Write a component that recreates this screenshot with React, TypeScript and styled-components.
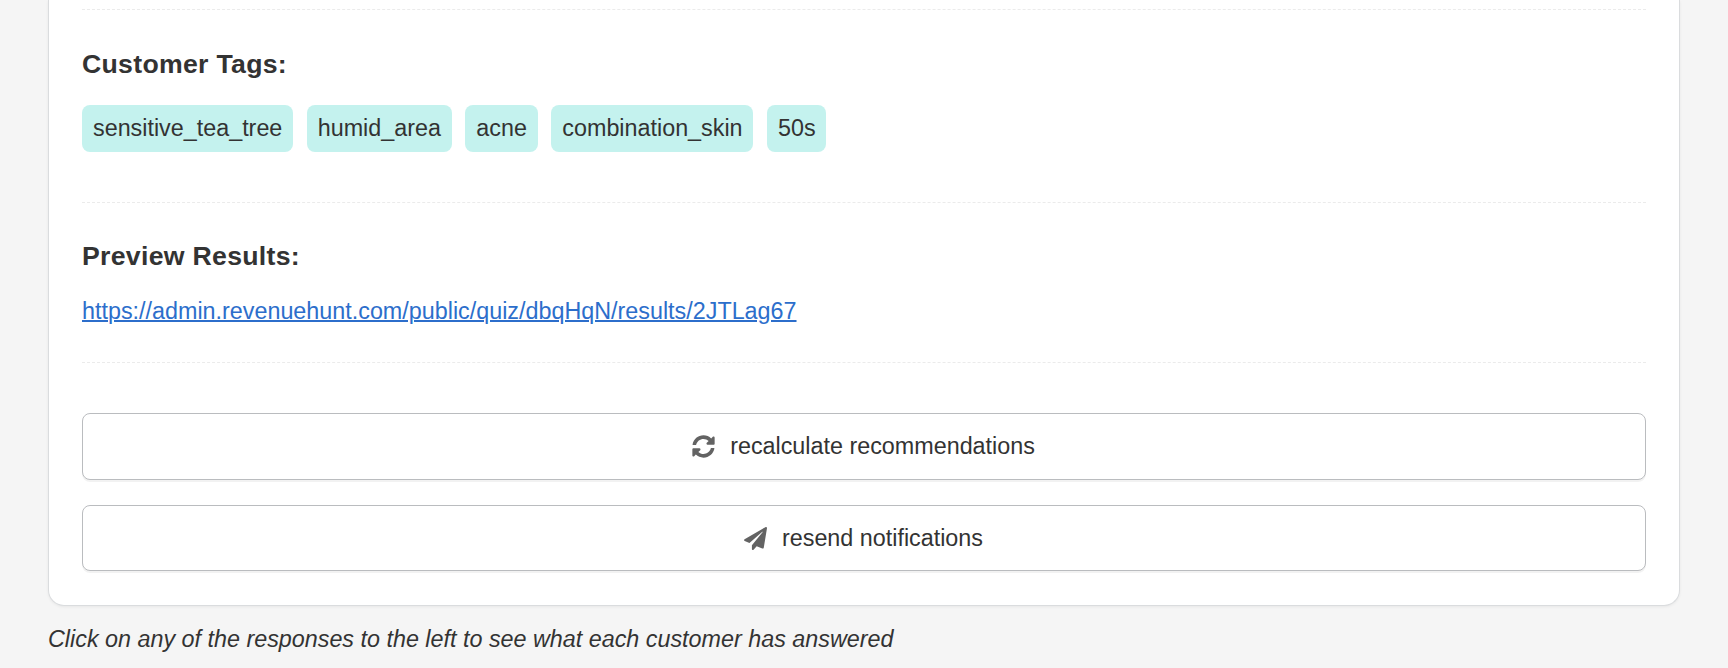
import React from "react";
import styled, { createGlobalStyle } from "styled-components";
import { FaSyncAlt, FaPaperPlane } from "react-icons/fa";

const GlobalStyle = createGlobalStyle`
  * { box-sizing: border-box; }
  body {
    margin: 0;
    background: #f5f5f5;
    color: #333;
    font-family: "Liberation Sans", Arial, sans-serif;
    font-size: 23.333px;
    line-height: 34px;
    overflow: hidden;
  }
`;

const Page = styled.main`
  display: flex;
  flex-direction: column;
  height: 668px;
  padding: 0 48px;
`;

const Card = styled.div`
  flex: none;
  padding: 9px 33px 34px;
  background: #fff;
  border: 1px solid #dadcde;
  border-top: 0;
  border-radius: 0 0 16px 16px;
  box-shadow: 0 1px 3px rgba(0, 0, 0, 0.06);
`;

const Section = styled.section<{ $top: number; $bottom: number }>`
  border-top: 1px dashed #ebebeb;
  padding: ${(p) => p.$top}px 0 ${(p) => p.$bottom}px;
`;

const Heading = styled.h2<{ $gap: number }>`
  margin: 0 0 ${(p) => p.$gap}px;
  font-size: 26.667px;
  line-height: 40px;
  font-weight: 700;
  letter-spacing: 0.29px;
`;

const Tags = styled.div`
  display: flex;
  gap: 13.8px;
`;

const Tag = styled.span`
  height: 47px;
  padding: 0 10.6px 0 11px;
  border-radius: 8px;
  background: #c4f2ee;
  line-height: 47px;
`;

const ResultLink = styled.a`
  display: block;
  width: max-content;
  color: #2c6ecb;
  text-decoration: underline;
  text-decoration-thickness: 2px;
`;

const Actions = styled(Section)`
  display: flex;
  flex-direction: column;
  gap: 25px;
`;

const ActionButton = styled.button<{ $height: number }>`
  display: flex;
  align-items: center;
  justify-content: center;
  gap: 15px;
  width: 100%;
  height: ${(p) => p.$height}px;
  padding: 0 1px ${(p) => p.$height % 2}px 0;
  border: 1px solid #babcbf;
  border-radius: 8px;
  background: #fff;
  box-shadow: 0 2px 0 rgba(0, 0, 0, 0.05);
  color: #333;
  font: inherit;

  svg {
    width: 23px;
    height: 23px;
    color: #636363;
  }
`;

const Hint = styled.p`
  margin: 16px 0 0;
  font-style: italic;
`;

const tags = ["sensitive_tea_tree", "humid_area", "acne", "combination_skin", "50s"];

export default function App() {
  return (
    <>
      <GlobalStyle />
      <Page>
        <Card>
          <Section $top={34} $bottom={50}>
            <Heading $gap={21}>Customer Tags:</Heading>
            <Tags>
              {tags.map((t) => (
                <Tag key={t}>{t}</Tag>
              ))}
            </Tags>
          </Section>
          <Section $top={33} $bottom={34}>
            <Heading $gap={18}>Preview Results:</Heading>
            <ResultLink href="#">https://admin.revenuehunt.com/public/quiz/dbqHqN/results/2JTLag67</ResultLink>
          </Section>
          <Actions $top={50} $bottom={0}>
            <ActionButton $height={67}>
              <FaSyncAlt />
              recalculate recommendations
            </ActionButton>
            <ActionButton $height={66}>
              <FaPaperPlane />
              resend notifications
            </ActionButton>
          </Actions>
        </Card>
        <Hint>Click on any of the responses to the left to see what each customer has answered</Hint>
      </Page>
    </>
  );
}
